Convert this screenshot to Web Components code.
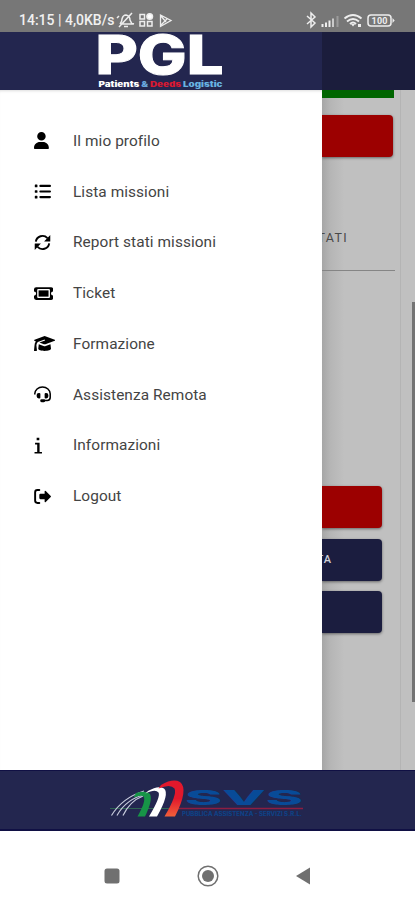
<!DOCTYPE html>
<html lang="it">
<head>
<meta charset="utf-8">
<meta name="viewport" content="width=device-width, initial-scale=1">
<title>PGL</title>
<style>
  body {
    margin: 0;
    background: #fff;
    font-family: Roboto, sans-serif;
  }
</style>
</head>
<body>
<pgl-app></pgl-app>

<script>
const ICONS = {
  user: ["0 0 448 512", `<path d="M224 256a128 128 0 1 0 0-256 128 128 0 1 0 0 256zm-46 48C80 304 0 384 0 482c0 17 13 30 30 30h388c17 0 30-13 30-30 0-98-80-178-178-178z"/>`],
  list: ["0 0 512 512", `<path d="M40 48h48q16 0 16 16v48q0 16-16 16H40q-16 0-16-16V64q0-16 16-16zM40 216h48q16 0 16 16v48q0 16-16 16H40q-16 0-16-16v-48q0-16 16-16zM40 384h48q16 0 16 16v48q0 16-16 16H40q-16 0-16-16v-48q0-16 16-16zM192 56h288a32 32 0 0 1 0 64H192a32 32 0 0 1 0-64zM192 224h288a32 32 0 0 1 0 64H192a32 32 0 0 1 0-64zM192 392h288a32 32 0 0 1 0 64H192a32 32 0 0 1 0-64z"/>`],
  sync: ["0 0 512 512", `<g fill="none" stroke="#000" stroke-width="58"><path d="M55 232A204 204 0 0 1 405 122M457 280A204 204 0 0 1 107 390"/></g><path d="M490 32v184q0 8-8 8H304l186-192zM22 480V296q0-8 8-8h178L22 480z"/>`],
  ticket: ["0 0 576 512", `<path fill-rule="evenodd" d="M64 64Q0 64 0 128v64a64 64 0 0 1 0 128v64q0 64 64 64h448q64 0 64-64v-64a64 64 0 0 1 0-128v-64q0-64-64-64zM128 120h320q32 0 32 32v208q0 32-32 32H128q-32 0-32-32V152q0-32 32-32z"/><path d="M138 162h300v188H138z"/>`],
  cap: ["0 0 640 512", `<path d="M320 32 16 144q-32 16 0 32l40 16q-40 52-40 118L0 464q0 16 18 16h54q20 0 16-20L72 310q4-58 42-96l206-82 12 30-166 66 130 48q24 8 48 0l280-100q32-16 0-32z"/><path d="m144 282-16 134c0 36 86 64 192 64s192-28 192-64l-16-134-144 52q-32 12-64 0z"/>`],
  headset: ["0 0 512 512", `<g fill="none" stroke="#000" stroke-width="46"><path d="M24 256v-20a232 208 0 0 1 464 0v110q0 88-88 88H294"/></g><path d="M144 208h16q32 0 32 32v104q0 32-32 32h-16q-64 0-64-64v-40q0-64 64-64zM368 208h-16q-32 0-32 32v104q0 32 32 32h16q64 0 64-64v-40q0-64-64-64zM230 400h64a40 40 0 0 1 0 88h-64a40 40 0 0 1 0-88z"/>`],
  info: ["0 0 320 512", `<path d="M80 20h80v80H80zM32 176h136v272h72v52H16v-52h80V228H32z"/>`],
  logout: ["0 0 512 512", `<path d="M160 62H104Q34 62 34 132v248q0 70 70 70h56" fill="none" stroke="#000" stroke-width="58" stroke-linecap="round"/><path d="M504 273 354 420q-34 26-34-14v-70H192q-32 0-32-32v-96q0-32 32-32h128v-70q0-40 34-14l150 147q14 17 0 34z"/>`],
};

class StatusBar extends HTMLElement {
  constructor() {
    super();
    this.attachShadow({ mode: "open" });
  }

  static get styles() {
    return /* css */`
      :host {
        display: flex;
        align-items: center;
        height: 32px;
        box-sizing: border-box;
        padding: 8px 20px 0 19px;
        background: #777;
        color: #f0f0f0;
        font-size: 14px;
        font-weight: 500;
        white-space: nowrap;
      }

      svg {
        display: block;
        flex: none;
      }

      .left { margin-left: 2px; }
      .right { margin-left: auto; }
    `;
  }

  connectedCallback() {
    this.shadowRoot.innerHTML = /* html */`
    <style>${StatusBar.styles}</style>
    <slot></slot>
    <svg class="left" width="58" height="18" viewBox="0 0 58 18" fill="none" stroke="#eee" stroke-width="1.5">
      <path d="M4 13q2-2 2-5 1-4 4-4 4 1 4 5l2 4H5M8 15.500h4M3 16 16 2M1 7l2-2M15 12l3 1"/>
      <rect x="24" y="3.500" width="4.500" height="4.500"/><rect x="24" y="10.500" width="4.500" height="4.500"/><rect x="31.500" y="10.500" width="4.500" height="4.500"/>
      <circle cx="33.700" cy="5.500" r="2.800" fill="#fff"/>
      <path d="M44.500 4v11.500L55 9.500zM45 5l5 6M45 14l6-6" stroke-width="1.300"/>
    </svg>
    <svg class="right" width="90" height="18" viewBox="0 0 90 18" fill="none" stroke="#eee" stroke-width="1.500">
      <path d="m2 5 8 7-4 4V2l4 4-8 7"/>
      <g fill="#eee" stroke="none">
        <path d="M16.500 13h2v3h-2zM20 11.500h2V16h-2zM23.500 9.500h2V16h-2z"/>
        <path d="M27 7.500h2V16h-2z" opacity=".7"/>
        <path d="M31.500 5h2v11h-2z" opacity=".3"/>
      </g>
      <path d="M39.500 7.500q8.500-7 17 0M42 10.500q6-5 12 0M45 13q3-3 6 0" stroke-width="1.900"/>
      <path d="m46 13 4 0-2 2.500zM53 13h3v3h-3z" fill="#eee" stroke="none"/>
      <rect x="63" y="4" width="23" height="11" rx="3"/>
      <path d="M87.500 7v5l2.200-2.500z" fill="#eee" stroke="none"/>
      <text x="74.500" y="12.700" fill="#eee" stroke="none" font-size="9" font-weight="700" text-anchor="middle" textLength="16">100</text>
    </svg>`;
  }
}

class BrandHeader extends HTMLElement {
  constructor() {
    super();
    this.attachShadow({ mode: "open" });
  }

  static get styles() {
    return /* css */`
      :host {
        display: grid;
        grid-template-columns: 322px 1fr;
        height: 58px;
        background: #23264f;
      }

      .shade { background: #1b1d3c; }
      svg { display: block; }
    `;
  }

  connectedCallback() {
    this.shadowRoot.innerHTML = /* html */`
    <style>${BrandHeader.styles}</style>
    <svg width="322" height="58" fill="#fff">
      <text x="95.500" y="41.500" font-family="Inter" font-weight="800" font-size="54" stroke="#fff" stroke-width="1" textLength="128" lengthAdjust="spacingAndGlyphs">PGL</text>
      <text x="98.500" y="54.800" font-family="Inter" font-weight="900" font-size="7.400" textLength="124" lengthAdjust="spacingAndGlyphs">Patients <tspan fill="#68a7dc">&amp;</tspan> <tspan fill="#d71932">Deeds</tspan> <tspan fill="#68b2e0">Logistic</tspan></text>
    </svg>
    <div class="shade"></div>`;
  }
}

class MenuItem extends HTMLElement {
  constructor() {
    super();
    this.attachShadow({ mode: "open" });
  }

  static get styles() {
    return /* css */`
      :host {
        display: flex;
        align-items: center;
        height: 50.75px;
        color: #444;
        font-size: 15.4px;
        letter-spacing: 0.08px;
      }

      .icon {
        width: 39px;
        flex: none;
      }

      svg {
        display: block;
        height: 17px;
      }
    `;
  }

  connectedCallback() {
    const [box, shape] = ICONS[this.getAttribute("icon")];
    this.shadowRoot.innerHTML = /* html */`
    <style>${MenuItem.styles}</style>
    <div class="icon"><svg viewBox="${box}">${shape}</svg></div>
    <slot></slot>`;
  }
}

class SideMenu extends HTMLElement {
  constructor() {
    super();
    this.attachShadow({ mode: "open" });
  }

  static get styles() {
    return /* css */`
      :host {
        display: block;
        box-sizing: border-box;
        padding: 25.500px 0 0 34px;
        background: #fff;
        box-shadow: inset 0 3px 3px -2px #ddd;
      }
    `;
  }

  connectedCallback() {
    this.shadowRoot.innerHTML = /* html */`
    <style>${SideMenu.styles}</style>
    <slot></slot>`;
  }
}

// the page left visible, dimmed, to the right of the open menu
class PageBehind extends HTMLElement {
  constructor() {
    super();
    this.attachShadow({ mode: "open" });
  }

  static get styles() {
    return /* css */`
      :host {
        display: grid;
        grid-template-columns: 1fr 15px;
        overflow: hidden;
        background: linear-gradient(90deg, #a6a6a6, #b5b5b5 8px, #c0c0c0 22px);
      }

      .content {
        min-width: 0;
      }

      .btn {
        display: flex;
        align-items: center;
        width: 60px;
        height: 42px;
        border-radius: 0 4px 4px 0;
        margin-bottom: 10.500px;
        background: #1b1d3f;
        box-shadow: 0 1px 3px #0007;
        color: #d0d0d8;
        font-size: 11px;
        font-weight: 500;
        letter-spacing: 1px;
      }

      .red { background: #9c0000; }

      .green {
        width: 72px;
        height: 8px;
        background: #006500;
      }

      .first {
        width: 71px;
        margin-top: 17px;
      }

      .clip {
        display: flex;
        justify-content: flex-end;
        overflow: hidden;
      }

      .label {
        width: 26px;
        height: 20px;
        margin: 70px 0 23px;
        align-items: center;
        color: #484848;
        font-size: 12.500px;
        letter-spacing: 1.300px;
      }

      .rule {
        width: 73px;
        height: 1px;
        margin-bottom: 215px;
        background: #858585;
      }

      .word { width: 10px; }

      .track {
        display: flex;
        justify-content: flex-end;
        border-left: 1px solid #b4b4b4;
        padding-top: 212px;
      }

      .thumb {
        width: 3px;
        height: 400px;
        background: #747474;
      }
    `;
  }

  connectedCallback() {
    this.shadowRoot.innerHTML = /* html */`
    <style>${PageBehind.styles}</style>
    <div class="content">
      <div class="green"></div>
      <div class="btn red first"></div>
      <div class="clip label">TATI</div>
      <div class="rule"></div>
      <div class="btn red"></div>
      <div class="btn"><span class="clip word">TA</span></div>
      <div class="btn"></div>
    </div>
    <div class="track"><div class="thumb"></div></div>`;
  }
}

class SponsorFooter extends HTMLElement {
  constructor() {
    super();
    this.attachShadow({ mode: "open" });
  }

  static get styles() {
    return /* css */`
      :host {
        display: flex;
        justify-content: center;
        height: 61px;
        box-sizing: border-box;
        border: solid #101044;
        border-width: 1px 0 2px;
        background: #23264f;
      }

      svg { display: block; }
    `;
  }

  connectedCallback() {
    this.shadowRoot.innerHTML = /* html */`
    <style>${SponsorFooter.styles}</style>
    <svg width="205" height="58" viewBox="105 0 205 58" fill="none">
      <defs>
        <linearGradient id="red" x1="0" y1="0" x2="0" y2="1">
          <stop offset=".5" stop-color="#e2182c"/>
          <stop offset="1" stop-color="#f0603a"/>
        </linearGradient>
      </defs>
      <path d="M110 37.500h60" stroke="#327553" stroke-width=".8"/>
      <path d="M178 37.500h125" stroke="#8b1e42" stroke-width="1.400"/>
      <g stroke="#c7cbdc" stroke-width="1.200">
        <path d="M111.500 44.500Q122 27 144 20M117 44.500Q126 28 146 23M123 44.500Q130 30 143 25"/>
      </g>
      <path d="M136 22q10-3 14 1 3 6-5 22.500h-7.500q9-16 6-20-2-2-10 1z" fill="#179447"/>
      <path d="M148 20q10-6 16-2.500 6 5-7 28h-8q12-20 9.500-24-3-4-13 1z" fill="#fff"/>
      <path d="M161 14q12-7 19-3 9 7-5 34.500h-10.500q13-22 10-28-4-5-16 0z" fill="url(#red)"/>
      <g fill="#084b98" font-family="Inter" font-weight="800">
        <text x="185" y="34" font-size="20" textLength="118" lengthAdjust="spacingAndGlyphs">SVS</text>
        <text x="182" y="44.500" font-size="5.600" opacity=".75" textLength="120" lengthAdjust="spacingAndGlyphs">PUBBLICA ASSISTENZA - SERVIZI S.R.L.</text>
      </g>
    </svg>`;
  }
}

class NavBar extends HTMLElement {
  constructor() {
    super();
    this.attachShadow({ mode: "open" });
  }

  static get styles() {
    return /* css */`
      :host {
        display: flex;
        justify-content: space-between;
        align-items: center;
        height: 69px;
        box-sizing: border-box;
        padding: 20px 104px 0;
      }
    `;
  }

  connectedCallback() {
    this.shadowRoot.innerHTML = /* html */`
    <style>${NavBar.styles}</style>
    <svg width="16" height="16"><rect x=".5" y=".5" width="15" height="15" rx="2.500" fill="#707070"/></svg>
    <svg width="22" height="22"><circle cx="11" cy="11" r="9.800" fill="none" stroke="#707070" stroke-width="1.500"/><circle cx="11" cy="11" r="6" fill="#707070"/></svg>
    <svg width="16" height="18"><path d="M1 9 15 .5v17z" fill="#707070"/></svg>`;
  }
}

class PglApp extends HTMLElement {
  constructor() {
    super();
    this.attachShadow({ mode: "open" });
  }

  static get styles() {
    return /* css */`
      :host {
        display: block;
        width: 415px;
        height: 900px;
        overflow: hidden;
      }

      main {
        display: grid;
        grid-template-columns: 322px 1fr;
        height: 680px;
      }
    `;
  }

  connectedCallback() {
    this.shadowRoot.innerHTML = /* html */`
    <style>${PglApp.styles}</style>
    <status-bar>14:15 | 4,0KB/s</status-bar>
    <brand-header></brand-header>
    <main>
      <side-menu>
        <menu-item icon="user">Il mio profilo</menu-item>
        <menu-item icon="list">Lista missioni</menu-item>
        <menu-item icon="sync">Report stati missioni</menu-item>
        <menu-item icon="ticket">Ticket</menu-item>
        <menu-item icon="cap">Formazione</menu-item>
        <menu-item icon="headset">Assistenza Remota</menu-item>
        <menu-item icon="info">Informazioni</menu-item>
        <menu-item icon="logout">Logout</menu-item>
      </side-menu>
      <page-behind></page-behind>
    </main>
    <sponsor-footer></sponsor-footer>
    <nav-bar></nav-bar>`;
  }
}

customElements.define("status-bar", StatusBar);
customElements.define("brand-header", BrandHeader);
customElements.define("menu-item", MenuItem);
customElements.define("side-menu", SideMenu);
customElements.define("page-behind", PageBehind);
customElements.define("sponsor-footer", SponsorFooter);
customElements.define("nav-bar", NavBar);
customElements.define("pgl-app", PglApp);
</script>
</body>
</html>
